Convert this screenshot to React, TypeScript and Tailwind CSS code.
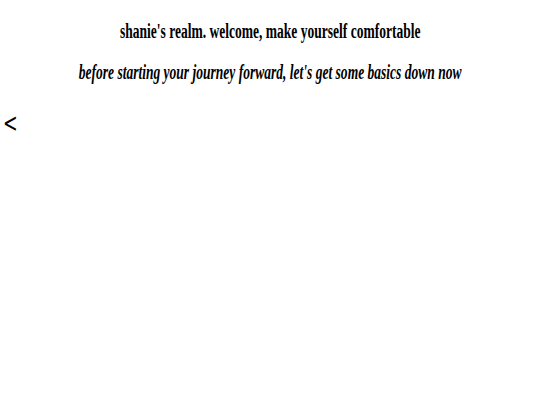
export default function App() {
  return (
    <div className="w-[540px] h-[405px] bg-white text-black relative overflow-hidden">
      <div className="flex flex-col items-center pt-[19px]">
        <h1 className="inline-block scale-x-[0.676] text-[20px] leading-[24px] font-bold font-['Liberation_Serif',serif] whitespace-nowrap">
          shanie's realm. welcome, make yourself comfortable
        </h1>
        <h2 className="inline-block scale-x-[0.676] mt-[17px] text-[20px] leading-[24px] font-bold italic font-['Liberation_Serif',serif] whitespace-nowrap">
          before starting your journey forward, let's get some basics down now
        </h2>
      </div>
      <div className="pl-[3px] pt-[24px]">
        <span className="inline-block origin-left scale-x-[0.676] text-[26px] leading-[30px] font-['DejaVu_Sans',sans-serif]">&lt;</span>
      </div>
    </div>
  );
}
